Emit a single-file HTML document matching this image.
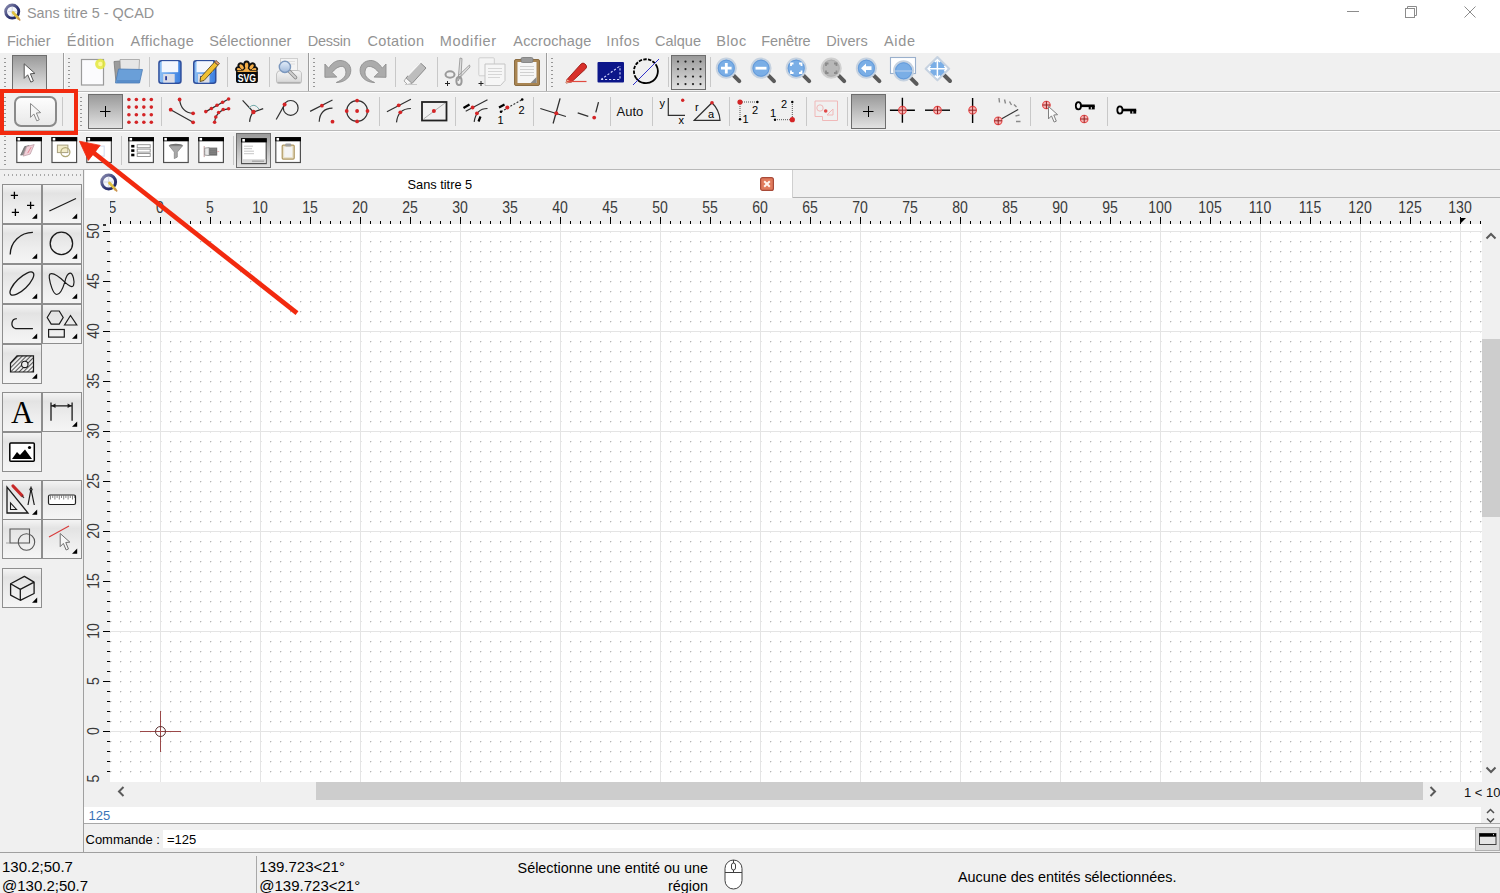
<!DOCTYPE html>
<html><head><meta charset="utf-8"><title>Sans titre 5 - QCAD</title>
<style>
*{margin:0;padding:0;box-sizing:border-box}
html,body{width:1500px;height:893px;overflow:hidden}
body{background:#f0f0f0;font-family:"Liberation Sans",sans-serif;position:relative;color:#000}
.a{position:absolute}
.t{white-space:nowrap;line-height:1}
svg{overflow:visible}
</style></head><body>
<div class="a" style="left:0px;top:0px;width:1500px;height:53px;background:#fff"></div>
<svg class="a" style="left:4px;top:4px;" width="18" height="18" viewBox="0 0 18 18"><g transform="scale(1.0)">
<defs><linearGradient id="lg18" x1="0" y1="0" x2="1" y2="1"><stop offset="0" stop-color="#8a8cb0"/><stop offset="0.6" stop-color="#2e3470"/><stop offset="1" stop-color="#1e2460"/></linearGradient></defs>
<circle cx="8.2" cy="7.6" r="6.6" fill="#f4f6fb" stroke="url(#lg18)" stroke-width="2.8"/>
<path d="M8.2 3 V12 M3.8 7.6 H12.6" stroke="#c8ccd8" stroke-width="0.7"/>
<path d="M9 8.5 L14.5 14.5" stroke="#e0c040" stroke-width="2.6" stroke-linecap="round"/>
<path d="M14 14 L15.8 16" stroke="#c89050" stroke-width="1.6" stroke-linecap="round"/>
</g></svg>
<div class="a t" style="left:27px;top:6px;font-size:14.4px;color:#939393">Sans titre 5 - QCAD</div>
<svg class="a" style="left:1340px;top:0px;" width="160" height="27" viewBox="0 0 160 27">
<line x1="7" y1="11.5" x2="19" y2="11.5" stroke="#8c8c8c" stroke-width="1"/>
<rect x="65.5" y="8.5" width="9" height="9" fill="none" stroke="#8c8c8c"/>
<path d="M67.5 8.5 V6.5 H76.5 V15.5 H74.5" fill="none" stroke="#8c8c8c"/>
<path d="M124.5 6.5 L135.5 17.5 M135.5 6.5 L124.5 17.5" stroke="#8c8c8c" stroke-width="1"/>
</svg>
<div class="a t" style="left:7px;top:33.5px;font-size:14.5px;color:#939393;letter-spacing:0px">Fichier</div>
<div class="a t" style="left:66.8px;top:33.5px;font-size:14.5px;color:#939393;letter-spacing:0.47px">Édition</div>
<div class="a t" style="left:130.6px;top:33.5px;font-size:14.5px;color:#939393;letter-spacing:0.37px">Affichage</div>
<div class="a t" style="left:209.2px;top:33.5px;font-size:14.5px;color:#939393;letter-spacing:0.15px">Sélectionner</div>
<div class="a t" style="left:307.8px;top:33.5px;font-size:14.5px;color:#939393;letter-spacing:-0.28px">Dessin</div>
<div class="a t" style="left:367.4px;top:33.5px;font-size:14.5px;color:#939393;letter-spacing:0.37px">Cotation</div>
<div class="a t" style="left:439.7px;top:33.5px;font-size:14.5px;color:#939393;letter-spacing:0.7px">Modifier</div>
<div class="a t" style="left:513.3px;top:33.5px;font-size:14.5px;color:#939393;letter-spacing:0.16px">Accrochage</div>
<div class="a t" style="left:606.3px;top:33.5px;font-size:14.5px;color:#939393;letter-spacing:0.42px">Infos</div>
<div class="a t" style="left:655px;top:33.5px;font-size:14.5px;color:#939393;letter-spacing:0px">Calque</div>
<div class="a t" style="left:716.3px;top:33.5px;font-size:14.5px;color:#939393;letter-spacing:0.57px">Bloc</div>
<div class="a t" style="left:761.3px;top:33.5px;font-size:14.5px;color:#939393;letter-spacing:-0.1px">Fenêtre</div>
<div class="a t" style="left:826.3px;top:33.5px;font-size:14.5px;color:#939393;letter-spacing:0.08px">Divers</div>
<div class="a t" style="left:884px;top:33.5px;font-size:14.5px;color:#939393;letter-spacing:0.67px">Aide</div>
<div class="a" style="left:0px;top:91px;width:1500px;height:1px;background:#b9b9b9"></div>
<div class="a" style="left:0px;top:92px;width:1500px;height:1px;background:#fdfdfd"></div>
<div class="a" style="left:0px;top:130px;width:1500px;height:1px;background:#b9b9b9"></div>
<div class="a" style="left:0px;top:131px;width:1500px;height:1px;background:#fdfdfd"></div>
<div class="a" style="left:0px;top:169px;width:1500px;height:1px;background:#b9b9b9"></div>
<div class="a" style="left:4px;top:58px;width:2px;height:29px;background:repeating-linear-gradient(#969696 0 1.5px,transparent 1.5px 4px)"></div>
<div class="a" style="left:12px;top:55px;width:35px;height:35px;border:1px solid #6e6e6e;background:linear-gradient(#9a9a9a,#e2e2e2)"></div>
<svg class="a" style="left:0px;top:0px;" width="1" height="1" viewBox="0 0 1 1"><path d="M24.20 63.80 L24.20 78.40 L27.70 74.80 L30.80 82.10 L33.40 81.00 L30.40 73.80 L34.90 73.40 Z" fill="#fff" stroke="#555" stroke-width="1"/></svg>
<div class="a" style="left:63px;top:53px;width:1px;height:38px;background:#9e9e9e"></div>
<div class="a" style="left:64px;top:53px;width:1px;height:38px;background:#fafafa"></div>
<div class="a" style="left:68px;top:58px;width:2px;height:29px;background:repeating-linear-gradient(#969696 0 1.5px,transparent 1.5px 4px)"></div>
<svg class="a" style="left:0px;top:0px;" width="1" height="1" viewBox="0 0 1 1"><rect x="81.5" y="59.5" width="22" height="25.5" fill="#fbfbfd" stroke="#9a9a9a" stroke-width="1.2"/><circle cx="100.3" cy="64" r="5.2" fill="#e4e83a" opacity="0.85"/><circle cx="100.3" cy="64" r="2.2" fill="#fff9a0"/><path d="M114 61.5 L120 61 L121 82.5 L116 82.5 Z" fill="#9c9c9c" stroke="#7a7a7a" stroke-width="0.8"/><path d="M120 59.5 L139.5 59.5 L139 70 L120.5 70 Z" fill="#e6e6e6" stroke="#a0a0a0" stroke-width="0.8"/><path d="M118.5 69 L142.5 69.5 L139.5 83 L115.5 83 Z" fill="#6a9fd8" stroke="#4d7cb6" stroke-width="0.8"/><rect x="117" y="80" width="23" height="3" fill="#4f82bf" opacity="0.6"/><g transform="translate(158.2 60)"><defs><linearGradient id="fl158" x1="0" y1="0" x2="1" y2="0"><stop offset="0" stop-color="#8ec0f4"/><stop offset="1" stop-color="#3a7ee0"/></linearGradient></defs><rect x="0.75" y="0.75" width="22" height="22.5" rx="2.5" fill="url(#fl158)" stroke="#2f4f9c" stroke-width="1.5"/><rect x="3.5" y="1.2" width="16.5" height="11" fill="#f4f7fd"/><rect x="5" y="14" width="11.5" height="8.6" fill="#dcdde6"/><rect x="7" y="16.2" width="1.8" height="4" fill="#2b3c9a"/></g><g transform="translate(193 60)"><defs><linearGradient id="fl193" x1="0" y1="0" x2="1" y2="0"><stop offset="0" stop-color="#8ec0f4"/><stop offset="1" stop-color="#3a7ee0"/></linearGradient></defs><rect x="0.75" y="0.75" width="22" height="22.5" rx="2.5" fill="url(#fl193)" stroke="#2f4f9c" stroke-width="1.5"/><rect x="3.5" y="1.2" width="16.5" height="11" fill="#f4f7fd"/><rect x="5" y="14" width="11.5" height="8.6" fill="#dcdde6"/><rect x="7" y="16.2" width="1.8" height="4" fill="#2b3c9a"/></g><path d="M200.5 77.5 L214.5 62 L218 65.2 L204 80.5 L200 81.5 Z" fill="#f0c030" stroke="#5a4a20" stroke-width="0.9"/><path d="M214.5 62 L216 60.5 L219.5 63.5 L218 65.2 Z" fill="#e89a70" stroke="#5a4a20" stroke-width="0.8"/><g fill="#111" stroke="#111" stroke-width="2.4"><ellipse cx="246.6" cy="65.6" rx="2.3" ry="3.9" transform="rotate(0 246.6 65.6)"/><ellipse cx="241.6" cy="66.8" rx="2.2" ry="3.6" transform="rotate(-38 241.6 66.8)"/><ellipse cx="251.6" cy="66.8" rx="2.2" ry="3.6" transform="rotate(38 251.6 66.8)"/><ellipse cx="239.2" cy="69.6" rx="1.8" ry="3.0" transform="rotate(-70 239.2 69.6)"/><ellipse cx="254.0" cy="69.6" rx="1.8" ry="3.0" transform="rotate(70 254.0 69.6)"/></g><g fill="#f4ae48"><ellipse cx="246.6" cy="65.6" rx="1.72" ry="3.12" transform="rotate(0 246.6 65.6)"/><ellipse cx="241.6" cy="66.8" rx="1.65" ry="2.88" transform="rotate(-38 241.6 66.8)"/><ellipse cx="251.6" cy="66.8" rx="1.65" ry="2.88" transform="rotate(38 251.6 66.8)"/><ellipse cx="239.2" cy="69.6" rx="1.35" ry="2.40" transform="rotate(-70 239.2 69.6)"/><ellipse cx="254.0" cy="69.6" rx="1.35" ry="2.40" transform="rotate(70 254.0 69.6)"/></g><rect x="236" y="70" width="21.9" height="13" rx="2.6" fill="#0a0a0a"/><path d="M237.5 71.3 H256.5" stroke="#f4ae48" stroke-width="1.3"/><path d="M243 71 L246.6 67 L250 71 Z" fill="#f4ae48"/><text transform="translate(246.9 81.6) scale(0.74 1)" font-family="Liberation Sans" font-weight="bold" font-size="11.8" fill="#fff" text-anchor="middle">SVG</text><defs><linearGradient id="pp1" x1="0" y1="0" x2="0" y2="1"><stop offset="0" stop-color="#f6f6f6"/><stop offset="1" stop-color="#d4d4d4"/></linearGradient><linearGradient id="pp2" x1="0" y1="0" x2="0" y2="1"><stop offset="0" stop-color="#e4eefa"/><stop offset="1" stop-color="#9fb8da"/></linearGradient></defs><rect x="280.5" y="58.5" width="17" height="13" fill="#f4f4f4" stroke="#cfcfcf" stroke-width="1"/><path d="M283 61.5 H295 M283 64 H295" stroke="#dadada" stroke-width="0.8"/><path d="M276.5 74 Q277 70.5 281 70.5 L297 70.5 Q301.5 70.5 301.5 74 L301.5 81 Q301.5 83.5 299 83.5 L279 83.5 Q276.5 83.5 276.5 81 Z" fill="url(#pp1)" stroke="#c2c2c2" stroke-width="1"/><path d="M277.5 82.5 H300.5" stroke="#b0b0b0" stroke-width="1.2"/><path d="M289.5 71.5 L295.5 77.5" stroke="#8a8a8a" stroke-width="3.6" stroke-linecap="round"/><path d="M289.5 71.5 L295.5 77.5" stroke="#d0d0d0" stroke-width="1.8" stroke-linecap="round"/><circle cx="284.9" cy="66.9" r="5.6" fill="url(#pp2)" stroke="#7b97bd" stroke-width="1.4"/></svg>
<div class="a" style="left:149px;top:57px;width:1px;height:30px;background:#c8c8c8"></div>
<div class="a" style="left:226.5px;top:57px;width:1px;height:30px;background:#c8c8c8"></div>
<div class="a" style="left:268.5px;top:57px;width:1px;height:30px;background:#c8c8c8"></div>
<div class="a" style="left:308px;top:53px;width:1px;height:38px;background:#9e9e9e"></div>
<div class="a" style="left:309px;top:53px;width:1px;height:38px;background:#fafafa"></div>
<div class="a" style="left:313px;top:58px;width:2px;height:29px;background:repeating-linear-gradient(#969696 0 1.5px,transparent 1.5px 4px)"></div>
<svg class="a" style="left:0px;top:0px;" width="1" height="1" viewBox="0 0 1 1"><path d="M324.9 64 L328.6 68.2 C332 63 336 60.5 340 60.5 C346.5 60.5 350.8 65 350.8 70.3 C350.8 77 345 82.5 336.3 82.5 C342 80 345.9 77 345.9 72.7 C345.9 68.5 344 66.4 341.9 66.4 C338 66.4 335 69 332.1 72.4 L336.8 77.1 L324.9 77.3 Z" fill="#ababab" stroke="#8e8e8e" stroke-width="0.9" stroke-linejoin="round"/><path d="M324.9 64 L328.6 68.2 C332 63 336 60.5 340 60.5 C346.5 60.5 350.8 65 350.8 70.3 C350.8 77 345 82.5 336.3 82.5 C342 80 345.9 77 345.9 72.7 C345.9 68.5 344 66.4 341.9 66.4 C338 66.4 335 69 332.1 72.4 L336.8 77.1 L324.9 77.3 Z" transform="translate(710.9 0) scale(-1 1)" fill="#ababab" stroke="#8e8e8e" stroke-width="0.9" stroke-linejoin="round"/><path d="M406 78 L420 62.5 L426 68 L412 83.5 Z" fill="#bdbdbd" stroke="#8a8a8a" stroke-width="1"/><path d="M408 75.5 L421.5 61 " stroke="#f8f8f8" stroke-width="1.4"/><path d="M406 78 L412 83.5 L407.5 84.5 L404 81 Z" fill="#f6f6f6" stroke="#9a9a9a" stroke-width="0.8"/><path d="M405 84.5 L417 84.5" stroke="#c8c8c8" stroke-width="1"/><path d="M458 81 L460 58 L462 58.5 L461 76 Z M458 76 L469.5 65 L470 67 L460.5 77 Z" fill="#e0e0e0" stroke="#9a9a9a" stroke-width="0.9"/><ellipse cx="450" cy="74.5" rx="4.5" ry="3.2" fill="none" stroke="#9a9a9a" stroke-width="2"/><ellipse cx="459" cy="81" rx="2.6" ry="4" fill="none" stroke="#9a9a9a" stroke-width="2"/><path d="M445 83.5 H450 M447.5 81 V86" stroke="#222" stroke-width="1"/><rect x="478.8" y="57.8" width="15.5" height="18" rx="1" fill="#f4f4f4" stroke="#cfcfcf" stroke-width="1"/><path d="M485 64 H505 V80.5 L500.5 85.5 H485 Z" fill="#f6f6f6" stroke="#c4c4c4" stroke-width="1"/><path d="M488 68.5 H502 M488 71.5 H502 M488 74.5 H502 M488 77.5 H500" stroke="#d6d6d6" stroke-width="1"/><path d="M478.5 83.5 H483.5 M481 81 V86" stroke="#222" stroke-width="1"/><rect x="514.5" y="59.5" width="25" height="26" rx="1.5" fill="#a98552" stroke="#8a6c42" stroke-width="1"/><rect x="517.5" y="62" width="19" height="21" fill="#f6f6f6"/><rect x="521" y="57.5" width="12" height="5" rx="1.5" fill="#9a9a9a" stroke="#777" stroke-width="0.8"/><path d="M520 66.5 H534 M520 69.5 H534 M520 72.5 H534 M520 75.5 H534" stroke="#d0d0d0" stroke-width="1"/><path d="M530.5 83 L536.5 77 V83 Z" fill="#8a8a8a"/></svg>
<div class="a" style="left:394.5px;top:57px;width:1px;height:30px;background:#c8c8c8"></div>
<div class="a" style="left:436.5px;top:57px;width:1px;height:30px;background:#c8c8c8"></div>
<div class="a" style="left:546px;top:53px;width:1px;height:38px;background:#9e9e9e"></div>
<div class="a" style="left:547px;top:53px;width:1px;height:38px;background:#fafafa"></div>
<div class="a" style="left:551px;top:58px;width:2px;height:29px;background:repeating-linear-gradient(#969696 0 1.5px,transparent 1.5px 4px)"></div>
<svg class="a" style="left:0px;top:0px;" width="1" height="1" viewBox="0 0 1 1"><path d="M567 79.5 L581 64 Q583 62 585 64 L586 65 Q587.5 67 585.5 69 L571.5 82 L566 83 Z" fill="#d8302a" stroke="#9a1a14" stroke-width="0.9"/><path d="M567 79.5 L571.5 82 L566 83 Z" fill="#f0c8a0"/><path d="M567 81.5 H586.5" stroke="#e04a40" stroke-width="1.2"/><rect x="597.5" y="62" width="26.5" height="20.5" rx="1" fill="#0c168a"/><path d="M601 79.5 L620 66 M601 79.5 H620 V66" stroke="#d8dcff" stroke-width="1.1" stroke-dasharray="2.2 1.8" fill="none"/><path d="M655.6 64.2 A11.6 11.6 0 1 1 636.2 78.2" fill="none" stroke="#000" stroke-width="1.8"/><path d="M636.2 78.2 A11.6 11.6 0 0 1 655.6 64.2" fill="none" stroke="#000" stroke-width="1.8" stroke-dasharray="3.4 1.3"/><path d="M633 85 L659 59" stroke="#3030c8" stroke-width="1"/></svg>
<div class="a" style="left:667.5px;top:57px;width:1px;height:30px;background:#c8c8c8"></div>
<div class="a" style="left:671px;top:55px;width:35px;height:35px;border:1px solid #6e6e6e;background:linear-gradient(#9a9a9a,#e2e2e2)"></div>
<svg class="a" style="left:0px;top:0px;" width="1" height="1" viewBox="0 0 1 1"><circle cx="678.0" cy="61.6" r="1.1" fill="#222"/><circle cx="678.0" cy="69.1" r="1.1" fill="#222"/><circle cx="678.0" cy="76.6" r="1.1" fill="#222"/><circle cx="678.0" cy="84.1" r="1.1" fill="#222"/><circle cx="685.5" cy="61.6" r="1.1" fill="#222"/><circle cx="685.5" cy="69.1" r="1.1" fill="#222"/><circle cx="685.5" cy="76.6" r="1.1" fill="#222"/><circle cx="685.5" cy="84.1" r="1.1" fill="#222"/><circle cx="693.0" cy="61.6" r="1.1" fill="#222"/><circle cx="693.0" cy="69.1" r="1.1" fill="#222"/><circle cx="693.0" cy="76.6" r="1.1" fill="#222"/><circle cx="693.0" cy="84.1" r="1.1" fill="#222"/><circle cx="700.5" cy="61.6" r="1.1" fill="#222"/><circle cx="700.5" cy="69.1" r="1.1" fill="#222"/><circle cx="700.5" cy="76.6" r="1.1" fill="#222"/><circle cx="700.5" cy="84.1" r="1.1" fill="#222"/></svg>
<div class="a" style="left:709.5px;top:57px;width:1px;height:30px;background:#c8c8c8"></div>
<svg class="a" style="left:0px;top:0px;" width="1" height="1" viewBox="0 0 1 1"><g><path d="M732.3 74.2 L739.3 81.2" stroke="#5a5a5a" stroke-width="4" stroke-linecap="round"/><circle cx="726.3" cy="68.2" r="9.6" fill="#7aaee6" stroke="#c6d2e0" stroke-width="2"/><circle cx="726.3" cy="68.2" r="8" fill="none" stroke="#5f95d6" stroke-width="0.8"/><path d="M721 68.2 H731.6 M726.3 63 V73.4" stroke="#fff" stroke-width="2.8"/></g><g><path d="M767 74.2 L774 81.2" stroke="#5a5a5a" stroke-width="4" stroke-linecap="round"/><circle cx="761" cy="68.2" r="9.6" fill="#7aaee6" stroke="#c6d2e0" stroke-width="2"/><circle cx="761" cy="68.2" r="8" fill="none" stroke="#5f95d6" stroke-width="0.8"/><path d="M755.5 68.2 H766.5" stroke="#fff" stroke-width="2.8"/></g><g><path d="M802.2 74.2 L809.2 81.2" stroke="#5a5a5a" stroke-width="4" stroke-linecap="round"/><circle cx="796.2" cy="68.2" r="9.6" fill="#7aaee6" stroke="#c6d2e0" stroke-width="2"/><circle cx="796.2" cy="68.2" r="8" fill="none" stroke="#5f95d6" stroke-width="0.8"/><path d="M791 66 V63.5 H793.5 M799 63.5 H801.5 V66 M801.5 70.5 V73 H799 M793.5 73 H791 V70.5" stroke="#fff" stroke-width="1.8" fill="none"/></g><g><path d="M837.2 74.2 L844.2 81.2" stroke="#5a5a5a" stroke-width="4" stroke-linecap="round"/><circle cx="831.2" cy="68.2" r="9.6" fill="#b8b8b8" stroke="#d0d0d0" stroke-width="2"/><circle cx="831.2" cy="68.2" r="8" fill="none" stroke="#a9a9a9" stroke-width="0.8"/><path d="M826 66 V63.5 H828.5 M834 63.5 H836.5 V66 M836.5 70.5 V73 H834 M828.5 73 H826 V70.5" stroke="#8a8a8a" stroke-width="1.8" fill="none"/></g><g><path d="M872.4 74.2 L879.4 81.2" stroke="#5a5a5a" stroke-width="4" stroke-linecap="round"/><circle cx="866.4" cy="68.2" r="9.6" fill="#7aaee6" stroke="#c6d2e0" stroke-width="2"/><circle cx="866.4" cy="68.2" r="8" fill="none" stroke="#5f95d6" stroke-width="0.8"/><path d="M861 68.2 L866 63.5 V66.3 H871.5 V70.1 H866 V73 Z" fill="#fff"/></g><rect x="890.5" y="57.5" width="25" height="16" fill="#fff" stroke="#9ab0cc" stroke-width="1.1"/><g><path d="M909.6 76.8 L916.6 83.8" stroke="#5a5a5a" stroke-width="4" stroke-linecap="round"/><circle cx="903.6" cy="70.8" r="9.6" fill="#7aaee6" stroke="#c6d2e0" stroke-width="2"/><circle cx="903.6" cy="70.8" r="8" fill="none" stroke="#5f95d6" stroke-width="0.8"/><path d="M895 71 H912" stroke="#bcd2ee" stroke-width="1"/></g><path d="M943 74 L950 81" stroke="#5a5a5a" stroke-width="4" stroke-linecap="round"/><path d="M937.4 57 L949.2 68.7 L937.4 80.4 L925.6 68.7 Z" fill="#7aaee6" stroke="#c6d2e0" stroke-width="2" stroke-linejoin="round"/><path d="M937.4 59.5 V78 M928 68.7 H947 M934.8 62 L937.4 59.5 L940 62 M934.8 75.5 L937.4 78 L940 75.5 M930.5 66.1 L928 68.7 L930.5 71.3 M944.3 66.1 L946.8 68.7 L944.3 71.3" stroke="#fff" stroke-width="1.5" fill="none"/></svg>
<div class="a" style="left:4px;top:97px;width:2px;height:30px;background:repeating-linear-gradient(#969696 0 1.5px,transparent 1.5px 4px)"></div>
<div class="a" style="left:14px;top:96px;width:43px;height:31px;border:2px solid #8a8a8a;border-radius:7px;background:linear-gradient(#fdfdfd,#e9e9e9)"></div>
<svg class="a" style="left:0px;top:0px;" width="1" height="1" viewBox="0 0 1 1"><path d="M30.50 103.50 L30.50 117.37 L33.83 113.95 L36.77 120.89 L39.24 119.84 L36.39 113.00 L40.66 112.62 Z" fill="#f6f6f6" stroke="#8a8a8a" stroke-width="1"/></svg>
<div class="a" style="left:62px;top:97px;width:1px;height:29px;background:#c8c8c8"></div>
<div class="a" style="left:80px;top:97px;width:2px;height:30px;background:repeating-linear-gradient(#969696 0 1.5px,transparent 1.5px 4px)"></div>
<div class="a" style="left:88px;top:94px;width:35px;height:35px;border:1px solid #6e6e6e;background:linear-gradient(#9a9a9a,#e2e2e2)"></div>
<svg class="a" style="left:0px;top:0px;" width="1" height="1" viewBox="0 0 1 1"><path d="M100 111.5 H110.5 M105.5 106 V117" stroke="#000" stroke-width="1"/><circle cx="128.90" cy="99.50" r="1.8" fill="#d42426"/><circle cx="128.90" cy="107.10" r="1.8" fill="#d42426"/><circle cx="128.90" cy="114.70" r="1.8" fill="#d42426"/><circle cx="128.90" cy="122.30" r="1.8" fill="#d42426"/><circle cx="136.37" cy="99.50" r="1.8" fill="#d42426"/><circle cx="136.37" cy="107.10" r="1.8" fill="#d42426"/><circle cx="136.37" cy="114.70" r="1.8" fill="#d42426"/><circle cx="136.37" cy="122.30" r="1.8" fill="#d42426"/><circle cx="143.84" cy="99.50" r="1.8" fill="#d42426"/><circle cx="143.84" cy="107.10" r="1.8" fill="#d42426"/><circle cx="143.84" cy="114.70" r="1.8" fill="#d42426"/><circle cx="143.84" cy="122.30" r="1.8" fill="#d42426"/><circle cx="151.31" cy="99.50" r="1.8" fill="#d42426"/><circle cx="151.31" cy="107.10" r="1.8" fill="#d42426"/><circle cx="151.31" cy="114.70" r="1.8" fill="#d42426"/><circle cx="151.31" cy="122.30" r="1.8" fill="#d42426"/><path d="M170.7 109.7 L193.1 122.3 M179.6 99.5 Q181 112.5 193.1 113.3" stroke="#303030" stroke-width="1.2" fill="none"/><circle cx="170.7" cy="109.7" r="1.9" fill="#d42426"/><circle cx="193.1" cy="122.3" r="1.9" fill="#d42426"/><circle cx="179.6" cy="99.5" r="1.9" fill="#d42426"/><circle cx="193.1" cy="113.3" r="1.9" fill="#d42426"/><path d="M205.8 111.6 L228.6 99 M214.6 122.3 Q216 110 228.6 108.8" stroke="#303030" stroke-width="1.2" fill="none"/><circle cx="205.8" cy="111.6" r="1.8" fill="#d42426"/><circle cx="211.4" cy="108.5" r="1.8" fill="#d42426"/><circle cx="217" cy="105.3" r="1.8" fill="#d42426"/><circle cx="222.6" cy="102.2" r="1.8" fill="#d42426"/><circle cx="228.6" cy="99" r="1.8" fill="#d42426"/><circle cx="214.6" cy="122.3" r="1.8" fill="#d42426"/><circle cx="215.8" cy="117" r="1.8" fill="#d42426"/><circle cx="218.6" cy="112.5" r="1.8" fill="#d42426"/><circle cx="223.2" cy="109.5" r="1.8" fill="#d42426"/><circle cx="228.6" cy="108.8" r="1.8" fill="#d42426"/><path d="M242.6 100.4 L253.4 112 L263.2 108.6 M253.4 112 Q250 116 249.6 121.9" stroke="#303030" stroke-width="1.2" fill="none"/><path d="M249 108 Q254 102 259 109" stroke="#70a8a8" stroke-width="1" fill="none"/><circle cx="253.4" cy="112" r="2.2" fill="#d42426"/><circle cx="290.7" cy="107.9" r="7.4" fill="none" stroke="#303030" stroke-width="1.2"/><path d="M276.2 119.5 L284.6 104.6" stroke="#303030" stroke-width="1.2"/><circle cx="284.6" cy="104.6" r="2" fill="#d42426"/><path d="M310.1 111.4 L332.5 100 M319.2 121.7 Q320 108.5 332.5 108.2" stroke="#303030" stroke-width="1.2" fill="none"/><circle cx="321.9" cy="105.7" r="1.9" fill="#d42426"/><circle cx="332.5" cy="121.7" r="1.9" fill="#d42426"/><circle cx="357.1" cy="111" r="10.4" fill="none" stroke="#303030" stroke-width="1.2"/><circle cx="357.1" cy="111" r="1.9" fill="#d42426"/><circle cx="357.1" cy="100.6" r="1.9" fill="#d42426"/><circle cx="357.1" cy="121.4" r="1.9" fill="#d42426"/><circle cx="346.7" cy="111" r="1.9" fill="#d42426"/><circle cx="367.5" cy="111" r="1.9" fill="#d42426"/><path d="M386.9 111.7 L410.9 99.3 M396.5 122.4 Q398 108.5 410.9 108.5" stroke="#303030" stroke-width="1.2" fill="none"/><circle cx="398.7" cy="105.3" r="1.9" fill="#d42426"/><circle cx="400.3" cy="112.3" r="1.9" fill="#d42426"/><rect x="422" y="102" width="24.5" height="18.5" fill="none" stroke="#222" stroke-width="1.8"/><path d="M423.5 119 L445 103" stroke="#909090" stroke-width="0.7"/><circle cx="433.9" cy="111" r="2" fill="#d42426"/><path d="M465.7 111.2 L487.5 99.7 M474.2 121.9 Q476 108.5 487.5 108.5" stroke="#303030" stroke-width="1.2" fill="none"/><path d="M463.5 108 L469.5 104.5 M478.5 121.5 L480.5 116.5" stroke="#000" stroke-width="2.2"/><circle cx="472.6" cy="107.5" r="1.9" fill="#d42426"/><circle cx="476.9" cy="113.3" r="1.9" fill="#d42426"/><path d="M501 111.7 L522.2 99.5" stroke="#303030" stroke-width="1.1" stroke-dasharray="2 1.6"/><path d="M499 107.5 L504.5 104.5" stroke="#000" stroke-width="2.2"/><circle cx="501" cy="111.7" r="1.3" fill="#000"/><circle cx="522.2" cy="99.5" r="1.3" fill="#000"/><circle cx="507.3" cy="107.5" r="2" fill="#d42426"/><text x="497.5" y="124" font-family="Liberation Sans" font-size="11" fill="#000">1</text><text x="518.5" y="113.6" font-family="Liberation Sans" font-size="11" fill="#000">2</text><path d="M540.3 108.5 L565.9 116.5 M560.1 98.4 L553.1 123.5" stroke="#303030" stroke-width="1.3"/><circle cx="556.3" cy="113.3" r="2" fill="#d42426"/><path d="M577.7 112.8 L588.3 116.3 M598.5 102.1 L595.8 112.3" stroke="#303030" stroke-width="1.3"/><circle cx="594.2" cy="117.6" r="1.9" fill="#d42426"/><text x="616.5" y="115.5" font-family="Liberation Sans" font-size="13" fill="#111">Auto</text><path d="M668.3 98 V115.3 H685" stroke="#303030" stroke-width="1.2" fill="none"/><text x="659.5" y="107" font-family="Liberation Sans" font-size="11" fill="#000">y</text><text x="678.5" y="123.5" font-family="Liberation Sans" font-size="11" fill="#000">x</text><circle cx="682.7" cy="100.3" r="1.7" fill="#d42426"/><path d="M694.3 120.3 L712 102.7 Q719.5 110 720 120.3 Z" stroke="#303030" stroke-width="1.2" fill="none"/><text x="695" y="110.5" font-family="Liberation Sans" font-size="11" fill="#000">r</text><text x="708" y="117.5" font-family="Liberation Sans" font-size="11" fill="#000">a</text><circle cx="712" cy="102.7" r="1.8" fill="#d42426"/><path d="M740 102 H757.4 M740 102 V119.3" stroke="#555" stroke-width="1" stroke-dasharray="1 1"/><circle cx="757.4" cy="102" r="1.2" fill="#000"/><circle cx="740" cy="119.3" r="1.2" fill="#000"/><circle cx="740" cy="102" r="2.6" fill="#d42426"/><text x="742.5" y="123" font-family="Liberation Sans" font-size="11" fill="#000">1</text><text x="752" y="114" font-family="Liberation Sans" font-size="11" fill="#000">2</text><path d="M775 119.7 H792.3 M792.3 102 V119.7" stroke="#555" stroke-width="1" stroke-dasharray="1 1"/><circle cx="775" cy="119.7" r="1.2" fill="#000"/><circle cx="792.3" cy="102" r="1.2" fill="#000"/><circle cx="792.3" cy="119.7" r="2.6" fill="#d42426"/><text x="770" y="117" font-family="Liberation Sans" font-size="11" fill="#000">1</text><text x="781" y="108" font-family="Liberation Sans" font-size="11" fill="#000">2</text><path d="M815 101 H837.5 V120.5 H822.5 V116.5 H815 Z" fill="none" stroke="#f0b8b8" stroke-width="1"/><circle cx="820" cy="108" r="3.2" fill="none" stroke="#f0b8b8"/><path d="M827 115 L833 109 V115 Z" fill="none" stroke="#f0b8b8"/><circle cx="825.7" cy="111" r="1.8" fill="#e04848"/></svg>
<div class="a" style="left:161px;top:97px;width:1px;height:29px;background:#c8c8c8"></div>
<div class="a" style="left:378.5px;top:97px;width:1px;height:29px;background:#c8c8c8"></div>
<div class="a" style="left:455px;top:97px;width:1px;height:29px;background:#c8c8c8"></div>
<div class="a" style="left:532.5px;top:97px;width:1px;height:29px;background:#c8c8c8"></div>
<div class="a" style="left:609.5px;top:97px;width:1px;height:29px;background:#c8c8c8"></div>
<div class="a" style="left:651.5px;top:97px;width:1px;height:29px;background:#c8c8c8"></div>
<div class="a" style="left:728.5px;top:97px;width:1px;height:29px;background:#c8c8c8"></div>
<div class="a" style="left:805.5px;top:97px;width:1px;height:29px;background:#c8c8c8"></div>
<div class="a" style="left:847px;top:97px;width:1px;height:29px;background:#c8c8c8"></div>
<div class="a" style="left:851px;top:94px;width:35px;height:35px;border:1px solid #6e6e6e;background:linear-gradient(#9a9a9a,#e2e2e2)"></div>
<svg class="a" style="left:0px;top:0px;" width="1" height="1" viewBox="0 0 1 1"><path d="M863 111.5 H873.5 M868.5 106 V117" stroke="#000" stroke-width="1"/><path d="M889.9 110.2 H914.9 M902.4 97.7 V122.7" stroke="#000" stroke-width="1.4"/><circle cx="902.4" cy="110.2" r="3.8" fill="#f6b4b4" stroke="#e84848" stroke-width="1.1"/><path d="M898.6 110.2 H906.1999999999999 M902.4 106.4 V114.0" stroke="#902020" stroke-width="1"/><path d="M925 110.2 H950" stroke="#000" stroke-width="1.4"/><circle cx="937.5" cy="110.2" r="3.8" fill="#f6b4b4" stroke="#e84848" stroke-width="1.1"/><path d="M933.7 110.2 H941.3 M937.5 106.4 V114.0" stroke="#902020" stroke-width="1"/><path d="M972.6 98 V123" stroke="#000" stroke-width="1.4"/><circle cx="972.6" cy="110.2" r="3.8" fill="#f6b4b4" stroke="#e84848" stroke-width="1.1"/><path d="M968.8000000000001 110.2 H976.4 M972.6 106.4 V114.0" stroke="#902020" stroke-width="1"/><path d="M998.2 120.8 L1018.2 109.4" stroke="#333" stroke-width="1.2"/><path d="M999 98 L999.5 102.5 M1004.5 99.5 L1005.5 103.5 M1009.5 101.5 L1011.5 105 M1014 104.5 L1016.5 107 M1015.5 116 L1019.5 115 M1016 121.5 L1020.5 121.5" stroke="#8a8a8a" stroke-width="1.4"/><circle cx="998.2" cy="120.8" r="3.8" fill="#f6b4b4" stroke="#e84848" stroke-width="1.1"/><path d="M994.4000000000001 120.8 H1002.0 M998.2 117.0 V124.6" stroke="#902020" stroke-width="1"/><circle cx="1046.4" cy="105" r="3.8" fill="#f6b4b4" stroke="#e84848" stroke-width="1.1"/><path d="M1042.6000000000001 105 H1050.2 M1046.4 101.2 V108.8" stroke="#902020" stroke-width="1"/><path d="M1048.50 106.50 L1048.50 118.91 L1051.47 115.85 L1054.11 122.06 L1056.32 121.12 L1053.77 115.00 L1057.60 114.66 Z" fill="#fafafa" stroke="#808080" stroke-width="1"/><g transform="translate(1075.2 105.8) scale(1.0)"><ellipse cx="3.2" cy="0" rx="2.6" ry="3.6" fill="none" stroke="#000" stroke-width="1.8"/><path d="M5.8 0 H19.5" stroke="#000" stroke-width="2.6"/><rect x="13.5" y="0" width="6" height="3.6" fill="#000"/><rect x="15.6" y="1.3" width="1" height="2.3" fill="#f0f0f0"/></g><circle cx="1084.2" cy="119" r="3.8" fill="#f6b4b4" stroke="#e84848" stroke-width="1.1"/><path d="M1080.4 119 H1088.0 M1084.2 115.2 V122.8" stroke="#902020" stroke-width="1"/><g transform="translate(1116.7 110) scale(1.0)"><ellipse cx="3.2" cy="0" rx="2.6" ry="3.6" fill="none" stroke="#000" stroke-width="1.8"/><path d="M5.8 0 H19.5" stroke="#000" stroke-width="2.6"/><rect x="13.5" y="0" width="6" height="3.6" fill="#000"/><rect x="15.6" y="1.3" width="1" height="2.3" fill="#f0f0f0"/></g></svg>
<div class="a" style="left:1029.5px;top:97px;width:1px;height:29px;background:#c8c8c8"></div>
<div class="a" style="left:1106.5px;top:97px;width:1px;height:29px;background:#c8c8c8"></div>
<div class="a" style="left:4px;top:136px;width:2px;height:29px;background:repeating-linear-gradient(#969696 0 1.5px,transparent 1.5px 4px)"></div>
<svg class="a" style="left:0px;top:0px;" width="1" height="1" viewBox="0 0 1 1"><g transform="translate(16.2 137.1)"><rect x="0.6" y="0.6" width="24.6" height="24.8" fill="#fff" stroke="#505050" stroke-width="1.2"/><rect x="0" y="0" width="25.8" height="4.2" fill="#000"/><rect x="1.3" y="0.8" width="2.6" height="2.6" fill="#fff"/><path d="M4.5 18 L8.5 9.5 L13 8.5 L9.5 17 Z" fill="#8a8a8a" stroke="#6a6a6a" stroke-width="0.8"/><path d="M7 19 L10.5 9.5 L18 7.5 L14 17 Z" fill="#f0d0d8" stroke="#c0a0a8" stroke-width="0.8"/><path d="M11.5 16 L15 10" stroke="#e07080" stroke-width="0.8"/></g><g transform="translate(51.4 137.1)"><rect x="0.6" y="0.6" width="24.6" height="24.8" fill="#fff" stroke="#505050" stroke-width="1.2"/><rect x="0" y="0" width="25.8" height="4.2" fill="#000"/><rect x="1.3" y="0.8" width="2.6" height="2.6" fill="#fff"/><rect x="6" y="8" width="10.5" height="7.5" fill="#f2ecc8" stroke="#a8a080" stroke-width="1"/><circle cx="14" cy="15" r="4.5" fill="none" stroke="#b0a878" stroke-width="1.3"/></g><g transform="translate(86.2 137.1)"><rect x="0.6" y="0.6" width="24.6" height="24.8" fill="#fff" stroke="#505050" stroke-width="1.2"/><rect x="0" y="0" width="25.8" height="4.2" fill="#000"/><rect x="1.3" y="0.8" width="2.6" height="2.6" fill="#fff"/><rect x="10" y="9" width="8" height="10" fill="none" stroke="#d8e0f0" stroke-width="1.2"/></g><g transform="translate(128.2 137.1)"><rect x="0.6" y="0.6" width="24.6" height="24.8" fill="#fff" stroke="#505050" stroke-width="1.2"/><rect x="0" y="0" width="25.8" height="4.2" fill="#000"/><rect x="1.3" y="0.8" width="2.6" height="2.6" fill="#fff"/><rect x="3" y="7.8" width="3.2" height="2.6" fill="#000"/><rect x="3" y="12.2" width="3.2" height="2.6" fill="#000"/><rect x="3" y="16.6" width="3.2" height="2.6" fill="#000"/><rect x="9" y="7.6" width="13" height="3" fill="none" stroke="#909090" stroke-width="0.9"/><rect x="9" y="12" width="13" height="3" fill="none" stroke="#909090" stroke-width="0.9"/><rect x="9" y="16.4" width="13" height="3" fill="none" stroke="#909090" stroke-width="0.9"/></g><g transform="translate(163 137.1)"><rect x="0.6" y="0.6" width="24.6" height="24.8" fill="#fff" stroke="#505050" stroke-width="1.2"/><rect x="0" y="0" width="25.8" height="4.2" fill="#000"/><rect x="1.3" y="0.8" width="2.6" height="2.6" fill="#fff"/><ellipse cx="12.9" cy="8.5" rx="6.8" ry="1.8" fill="#707070"/><path d="M6.2 8.6 L11.3 15 V21.5 L14.3 20 V15 L19.6 8.6 Z" fill="#a8a8a8" stroke="#808080" stroke-width="0.7"/></g><g transform="translate(198.2 137.1)"><rect x="0.6" y="0.6" width="24.6" height="24.8" fill="#fff" stroke="#505050" stroke-width="1.2"/><rect x="0" y="0" width="25.8" height="4.2" fill="#000"/><rect x="1.3" y="0.8" width="2.6" height="2.6" fill="#fff"/><path d="M6 9 V20 M6 14.5 H9" stroke="#b08080" stroke-width="0.8"/><path d="M6.5 11 L11 10.5 V18.5 L6.5 18 Z" fill="#e8e8e8" stroke="#888" stroke-width="0.8"/><rect x="11" y="10.5" width="8" height="8" fill="#707070"/><path d="M12 12 H18 M12 14 H18 M12 16 H18" stroke="#a0a0a0" stroke-width="0.6"/><path d="M19 14.5 H21" stroke="#e0a0a0" stroke-width="0.8"/></g><g transform="translate(275.2 137.1)"><rect x="0.6" y="0.6" width="24.6" height="24.8" fill="#fff" stroke="#505050" stroke-width="1.2"/><rect x="0" y="0" width="25.8" height="4.2" fill="#000"/><rect x="1.3" y="0.8" width="2.6" height="2.6" fill="#fff"/><rect x="7" y="8" width="12" height="14" rx="1" fill="#e8e0c8" stroke="#b09860" stroke-width="1.2"/><rect x="9" y="10" width="8" height="10" fill="#f4f4f4"/><rect x="10" y="6.5" width="6" height="3" rx="1" fill="#a0a0a0"/></g></svg>
<div class="a" style="left:120.5px;top:136px;width:1px;height:29px;background:#c8c8c8"></div>
<div class="a" style="left:232.5px;top:136px;width:1px;height:29px;background:#c8c8c8"></div>
<div class="a" style="left:236px;top:133px;width:35px;height:35px;border:1px solid #6e6e6e;background:linear-gradient(#9a9a9a,#e2e2e2)"></div>
<svg class="a" style="left:0px;top:0px;" width="1" height="1" viewBox="0 0 1 1"><g transform="translate(241 138.2)"><rect x="0.6" y="0.6" width="24.6" height="24.8" fill="#fff" stroke="#505050" stroke-width="1.2"/><rect x="0" y="0" width="25.8" height="4.2" fill="#000"/><rect x="1.3" y="0.8" width="2.6" height="2.6" fill="#fff"/><rect x="1" y="21" width="23.8" height="3.6" fill="#d8d8d8"/><path d="M3 8 H12 M3 10.5 H11 M3 13 H13 M3 15.5 H13" stroke="#c0c0c0" stroke-width="0.9"/><path d="M11 23 H23" stroke="#a0a0a0" stroke-width="1.2"/></g></svg>
<div class="a" style="left:83px;top:170px;width:1px;height:683px;background:#a0a0a0"></div>
<div class="a" style="left:4px;top:174px;width:77px;height:2px;background:repeating-linear-gradient(90deg,#a8a8a8 0 1px,transparent 1px 4px)"></div>
<div class="a" style="left:2px;top:184px;width:40px;height:40px;border:1px solid #8e8e8e;background:linear-gradient(#f4f4f4 0,#e3e3e3 22%,#ededed 60%,#f5f5f5 100%)"></div>
<div class="a" style="left:42px;top:184px;width:40px;height:40px;border:1px solid #8e8e8e;background:linear-gradient(#f4f4f4 0,#e3e3e3 22%,#ededed 60%,#f5f5f5 100%)"></div>
<div class="a" style="left:2px;top:224px;width:40px;height:40px;border:1px solid #8e8e8e;background:linear-gradient(#f4f4f4 0,#e3e3e3 22%,#ededed 60%,#f5f5f5 100%)"></div>
<div class="a" style="left:42px;top:224px;width:40px;height:40px;border:1px solid #8e8e8e;background:linear-gradient(#f4f4f4 0,#e3e3e3 22%,#ededed 60%,#f5f5f5 100%)"></div>
<div class="a" style="left:2px;top:264px;width:40px;height:40px;border:1px solid #8e8e8e;background:linear-gradient(#f4f4f4 0,#e3e3e3 22%,#ededed 60%,#f5f5f5 100%)"></div>
<div class="a" style="left:42px;top:264px;width:40px;height:40px;border:1px solid #8e8e8e;background:linear-gradient(#f4f4f4 0,#e3e3e3 22%,#ededed 60%,#f5f5f5 100%)"></div>
<div class="a" style="left:2px;top:304px;width:40px;height:40px;border:1px solid #8e8e8e;background:linear-gradient(#f4f4f4 0,#e3e3e3 22%,#ededed 60%,#f5f5f5 100%)"></div>
<div class="a" style="left:42px;top:304px;width:40px;height:40px;border:1px solid #8e8e8e;background:linear-gradient(#f4f4f4 0,#e3e3e3 22%,#ededed 60%,#f5f5f5 100%)"></div>
<div class="a" style="left:2px;top:344px;width:40px;height:40px;border:1px solid #8e8e8e;background:linear-gradient(#f4f4f4 0,#e3e3e3 22%,#ededed 60%,#f5f5f5 100%)"></div>
<div class="a" style="left:2px;top:392px;width:40px;height:40px;border:1px solid #8e8e8e;background:linear-gradient(#f4f4f4 0,#e3e3e3 22%,#ededed 60%,#f5f5f5 100%)"></div>
<div class="a" style="left:42px;top:392px;width:40px;height:40px;border:1px solid #8e8e8e;background:linear-gradient(#f4f4f4 0,#e3e3e3 22%,#ededed 60%,#f5f5f5 100%)"></div>
<div class="a" style="left:2px;top:432px;width:40px;height:40px;border:1px solid #8e8e8e;background:linear-gradient(#f4f4f4 0,#e3e3e3 22%,#ededed 60%,#f5f5f5 100%)"></div>
<div class="a" style="left:2px;top:480px;width:40px;height:40px;border:1px solid #8e8e8e;background:linear-gradient(#f4f4f4 0,#e3e3e3 22%,#ededed 60%,#f5f5f5 100%)"></div>
<div class="a" style="left:42px;top:480px;width:40px;height:40px;border:1px solid #8e8e8e;background:linear-gradient(#f4f4f4 0,#e3e3e3 22%,#ededed 60%,#f5f5f5 100%)"></div>
<div class="a" style="left:2px;top:519px;width:40px;height:40px;border:1px solid #8e8e8e;background:linear-gradient(#f4f4f4 0,#e3e3e3 22%,#ededed 60%,#f5f5f5 100%)"></div>
<div class="a" style="left:42px;top:519px;width:40px;height:40px;border:1px solid #8e8e8e;background:linear-gradient(#f4f4f4 0,#e3e3e3 22%,#ededed 60%,#f5f5f5 100%)"></div>
<div class="a" style="left:2px;top:568px;width:40px;height:40px;border:1px solid #8e8e8e;background:linear-gradient(#f4f4f4 0,#e3e3e3 22%,#ededed 60%,#f5f5f5 100%)"></div>
<svg class="a" style="left:0px;top:0px;" width="1" height="1" viewBox="0 0 1 1"><path d="M32 218.8 H37.2 V213.6 Z" fill="#000"/><path d="M72 218.8 H77.2 V213.6 Z" fill="#000"/><path d="M32 258.8 H37.2 V253.6 Z" fill="#000"/><path d="M72 258.8 H77.2 V253.6 Z" fill="#000"/><path d="M32 298.8 H37.2 V293.6 Z" fill="#000"/><path d="M72 298.8 H77.2 V293.6 Z" fill="#000"/><path d="M32 338.8 H37.2 V333.6 Z" fill="#000"/><path d="M72 338.8 H77.2 V333.6 Z" fill="#000"/><path d="M32 378.8 H37.2 V373.6 Z" fill="#000"/><path d="M72 426.8 H77.2 V421.6 Z" fill="#000"/><path d="M32 514.8 H37.2 V509.6 Z" fill="#000"/><path d="M72 553.8 H77.2 V548.6 Z" fill="#000"/><path d="M32 602.8 H37.2 V597.6 Z" fill="#000"/><path d="M10.8 195.3 H18.0 M14.4 191.70000000000002 V198.9" stroke="#000" stroke-width="1.3"/><path d="M27.0 205.4 H34.2 M30.6 201.8 V209.0" stroke="#000" stroke-width="1.3"/><path d="M11.8 212.3 H19.0 M15.4 208.70000000000002 V215.9" stroke="#000" stroke-width="1.3"/><path d="M49.4 211 L76 198.5" stroke="#1a1a1a" stroke-width="1.2"/><path d="M10.2 254.6 A22.5 22.5 0 0 1 32.9 232.4" stroke="#1a1a1a" stroke-width="1.3" fill="none"/><circle cx="61.4" cy="243.4" r="11.2" stroke="#1a1a1a" stroke-width="1.3" fill="none"/><ellipse cx="21.9" cy="283.6" rx="15.6" ry="5.7" transform="rotate(-44 21.9 283.6)" stroke="#1a1a1a" stroke-width="1.3" fill="none"/><path d="M50 274 C54 272 60 277.5 64.8 282.1 C68.5 285.5 72 288 73.5 285.5 C75 282 73 273 70 273.2 C67 273.5 65.5 279 64.8 282.1 C63 288 60 294.5 56.8 294.5 C53 294.5 50 283 49.3 278 C49 275.5 49.5 274.5 50 274 Z" stroke="#1a1a1a" stroke-width="1.2" fill="none"/><path d="M16.8 318.6 C11 318.8 10 327 15.7 328.6 H32.9" stroke="#1a1a1a" stroke-width="1.3" fill="none"/><path d="M47.2 317.5 L51.2 311 H59.2 L63.2 317.5 L59.2 324.1 H51.2 Z" stroke="#1a1a1a" stroke-width="1.2" fill="none"/><path d="M64.5 325 L70.5 315.5 L76.8 325 Z" stroke="#1a1a1a" stroke-width="1.2" fill="none"/><rect x="48.6" y="329.5" width="15.7" height="7.6" stroke="#1a1a1a" stroke-width="1.2" fill="none"/><defs><pattern id="hp" width="3" height="3" patternUnits="userSpaceOnUse" patternTransform="rotate(45)"><rect width="1" height="3" fill="#555"/></pattern></defs><path d="M10.5 372 V363 L17 355.8 H33.5 V372 Z" fill="url(#hp)" stroke="#1a1a1a" stroke-width="1.2"/><circle cx="24.8" cy="364.4" r="3.2" fill="#ececec" stroke="#1a1a1a" stroke-width="1.1"/><text x="22.2" y="422.6" font-family="Liberation Serif" font-size="31" text-anchor="middle" fill="#000">A</text><path d="M51 402.5 V420.7 M72.1 402.5 V420.7 M51 405.8 H72.1" stroke="#1a1a1a" stroke-width="1.3" fill="none"/><path d="M51.5 405.8 L55.5 403.6 V408 Z M71.6 405.8 L67.6 403.6 V408 Z" fill="#1a1a1a"/><rect x="9.8" y="443" width="24.5" height="18.3" rx="1" fill="#fff" stroke="#000" stroke-width="1.5"/><path d="M12 459 L17 452 L20 455 L25 449.5 L32 459 Z" fill="#000"/><circle cx="29.5" cy="447.5" r="1.6" fill="#000"/><path d="M7 487 V513 H28 Z" fill="none" stroke="#1a1a1a" stroke-width="1.3"/><path d="M10.5 503 V509.5 H16.5 Z" fill="none" stroke="#1a1a1a" stroke-width="1.1"/><path d="M13 486 L22 495.5" stroke="#c82828" stroke-width="3.2" stroke-linecap="round"/><path d="M22 495.5 L24 498" stroke="#333" stroke-width="1.2"/><path d="M31 486.5 V489 M31 489 L28 505 M31 489 L34.3 505" stroke="#1a1a1a" stroke-width="1.2" fill="none"/><circle cx="31" cy="489.5" r="1.3" fill="none" stroke="#1a1a1a"/><rect x="48.5" y="495" width="27" height="9.5" rx="1.5" fill="#fff" stroke="#222" stroke-width="1.2"/><path d="M50.5 495.5V499.5 M52.7 495.5V498 M54.9 495.5V499.5 M57.1 495.5V498 M59.3 495.5V499.5 M61.5 495.5V498 M63.7 495.5V499.5 M65.9 495.5V498 M68.1 495.5V499.5 M70.3 495.5V498 M72.5 495.5V499.5 M74.7 495.5V498" stroke="#333" stroke-width="0.6"/><path d="M10 529 H29.5 V543 H10 Z" fill="none" stroke="#555" stroke-width="1.1"/><circle cx="26.5" cy="542" r="8.2" fill="none" stroke="#555" stroke-width="1.1"/><path d="M6 543 H10" stroke="#999" stroke-width="0.9"/><path d="M49 537 L69 526" stroke="#d83a3a" stroke-width="1.1"/><path d="M60.20 533.50 L60.20 546.64 L63.35 543.40 L66.14 549.97 L68.48 548.98 L65.78 542.50 L69.83 542.14 Z" fill="#f6f6f6" stroke="#707070" stroke-width="1"/><path d="M10.6 583.7 L24.4 576.4 L34.1 582.1 L20.3 589.4 Z M10.6 583.7 V595.1 L20.3 600.3 L34.1 593.5 V582.1 M20.3 589.4 V600.3" fill="none" stroke="#1a1a1a" stroke-width="1.3" stroke-linejoin="round"/></svg>
<div class="a" style="left:85px;top:170px;width:707px;height:28px;background:#fff"></div>
<div class="a" style="left:792px;top:170px;width:1px;height:28px;background:#cfcfcf"></div>
<div class="a" style="left:793px;top:197px;width:707px;height:1px;background:#b4b4b4"></div>
<svg class="a" style="left:100px;top:174px;" width="19" height="19" viewBox="0 0 19 19"><g transform="scale(1.0555555555555556)">
<defs><linearGradient id="lg19" x1="0" y1="0" x2="1" y2="1"><stop offset="0" stop-color="#8a8cb0"/><stop offset="0.6" stop-color="#2e3470"/><stop offset="1" stop-color="#1e2460"/></linearGradient></defs>
<circle cx="8.2" cy="7.6" r="6.6" fill="#f4f6fb" stroke="url(#lg19)" stroke-width="2.8"/>
<path d="M8.2 3 V12 M3.8 7.6 H12.6" stroke="#c8ccd8" stroke-width="0.7"/>
<path d="M9 8.5 L14.5 14.5" stroke="#e0c040" stroke-width="2.6" stroke-linecap="round"/>
<path d="M14 14 L15.8 16" stroke="#c89050" stroke-width="1.6" stroke-linecap="round"/>
</g></svg>
<div class="a t" style="left:407.5px;top:178.5px;font-size:12.8px;color:#000">Sans titre 5</div>
<svg class="a" style="left:760px;top:177px;" width="14" height="14" viewBox="0 0 14 14"><rect x="0.6" y="0.6" width="12.8" height="12.8" rx="2" fill="#e07a5c" stroke="#a84a38" stroke-width="1.2"/><path d="M4.2 4.2 L9.8 9.8 M9.8 4.2 L4.2 9.8" stroke="#fff4ee" stroke-width="2"/></svg>
<div class="a" style="left:84px;top:198px;width:1398px;height:26px;background:#f0f0f0"></div>
<div class="a" style="left:84px;top:198px;width:26px;height:584px;background:#f0f0f0"></div>
<svg class="a" style="left:110px;top:224px;" width="1372" height="558" viewBox="0 0 1372 558"><defs><pattern id="dots" x="0" y="7" width="10" height="10" patternUnits="userSpaceOnUse"><rect x="0" y="0" width="1" height="1" fill="#b4b4b4"/><rect x="1" y="0" width="1" height="1" fill="#e6e6e6"/><rect x="0" y="1" width="1" height="1" fill="#e6e6e6"/></pattern></defs><rect x="0" y="0" width="1372" height="558" fill="#fff"/><rect x="0" y="0" width="1372" height="555" fill="url(#dots)"/><path d="M50.5 0V558 M150.5 0V558 M250.5 0V558 M350.5 0V558 M450.5 0V558 M550.5 0V558 M650.5 0V558 M750.5 0V558 M850.5 0V558 M950.5 0V558 M1050.5 0V558 M1150.5 0V558 M1250.5 0V558 M1350.5 0V558 M0 507.5H1372 M0 407.5H1372 M0 307.5H1372 M0 207.5H1372 M0 107.5H1372 M0 7.5H1372" stroke="#e4e4e4" stroke-width="1" fill="none"/><path d="M30 507.5H71 M50.5 487V528" stroke="#9a4848" stroke-width="1"/><circle cx="50.5" cy="507.5" r="5" fill="none" stroke="#5a3030" stroke-width="1"/></svg>
<svg class="a" style="left:110px;top:198px;overflow:hidden" width="1372" height="26" viewBox="0 0 1372 26"><path d="M0.5 19V26 M10.5 23V26 M20.5 23V26 M30.5 23V26 M40.5 23V26 M50.5 19V26 M60.5 23V26 M70.5 23V26 M80.5 23V26 M90.5 23V26 M100.5 19V26 M110.5 23V26 M120.5 23V26 M130.5 23V26 M140.5 23V26 M150.5 19V26 M160.5 23V26 M170.5 23V26 M180.5 23V26 M190.5 23V26 M200.5 19V26 M210.5 23V26 M220.5 23V26 M230.5 23V26 M240.5 23V26 M250.5 19V26 M260.5 23V26 M270.5 23V26 M280.5 23V26 M290.5 23V26 M300.5 19V26 M310.5 23V26 M320.5 23V26 M330.5 23V26 M340.5 23V26 M350.5 19V26 M360.5 23V26 M370.5 23V26 M380.5 23V26 M390.5 23V26 M400.5 19V26 M410.5 23V26 M420.5 23V26 M430.5 23V26 M440.5 23V26 M450.5 19V26 M460.5 23V26 M470.5 23V26 M480.5 23V26 M490.5 23V26 M500.5 19V26 M510.5 23V26 M520.5 23V26 M530.5 23V26 M540.5 23V26 M550.5 19V26 M560.5 23V26 M570.5 23V26 M580.5 23V26 M590.5 23V26 M600.5 19V26 M610.5 23V26 M620.5 23V26 M630.5 23V26 M640.5 23V26 M650.5 19V26 M660.5 23V26 M670.5 23V26 M680.5 23V26 M690.5 23V26 M700.5 19V26 M710.5 23V26 M720.5 23V26 M730.5 23V26 M740.5 23V26 M750.5 19V26 M760.5 23V26 M770.5 23V26 M780.5 23V26 M790.5 23V26 M800.5 19V26 M810.5 23V26 M820.5 23V26 M830.5 23V26 M840.5 23V26 M850.5 19V26 M860.5 23V26 M870.5 23V26 M880.5 23V26 M890.5 23V26 M900.5 19V26 M910.5 23V26 M920.5 23V26 M930.5 23V26 M940.5 23V26 M950.5 19V26 M960.5 23V26 M970.5 23V26 M980.5 23V26 M990.5 23V26 M1000.5 19V26 M1010.5 23V26 M1020.5 23V26 M1030.5 23V26 M1040.5 23V26 M1050.5 19V26 M1060.5 23V26 M1070.5 23V26 M1080.5 23V26 M1090.5 23V26 M1100.5 19V26 M1110.5 23V26 M1120.5 23V26 M1130.5 23V26 M1140.5 23V26 M1150.5 19V26 M1160.5 23V26 M1170.5 23V26 M1180.5 23V26 M1190.5 23V26 M1200.5 19V26 M1210.5 23V26 M1220.5 23V26 M1230.5 23V26 M1240.5 23V26 M1250.5 19V26 M1260.5 23V26 M1270.5 23V26 M1280.5 23V26 M1290.5 23V26 M1300.5 19V26 M1310.5 23V26 M1320.5 23V26 M1330.5 23V26 M1340.5 23V26 M1350.5 19V26 M1360.5 23V26 M1370.5 23V26" stroke="#000" stroke-width="1"/><g font-family="Liberation Sans" font-size="15.6" fill="#3a3a3a"><text transform="translate(0 15) scale(0.9 1)" text-anchor="middle">-5</text><text transform="translate(50 15) scale(0.9 1)" text-anchor="middle">0</text><text transform="translate(100 15) scale(0.9 1)" text-anchor="middle">5</text><text transform="translate(150 15) scale(0.9 1)" text-anchor="middle">10</text><text transform="translate(200 15) scale(0.9 1)" text-anchor="middle">15</text><text transform="translate(250 15) scale(0.9 1)" text-anchor="middle">20</text><text transform="translate(300 15) scale(0.9 1)" text-anchor="middle">25</text><text transform="translate(350 15) scale(0.9 1)" text-anchor="middle">30</text><text transform="translate(400 15) scale(0.9 1)" text-anchor="middle">35</text><text transform="translate(450 15) scale(0.9 1)" text-anchor="middle">40</text><text transform="translate(500 15) scale(0.9 1)" text-anchor="middle">45</text><text transform="translate(550 15) scale(0.9 1)" text-anchor="middle">50</text><text transform="translate(600 15) scale(0.9 1)" text-anchor="middle">55</text><text transform="translate(650 15) scale(0.9 1)" text-anchor="middle">60</text><text transform="translate(700 15) scale(0.9 1)" text-anchor="middle">65</text><text transform="translate(750 15) scale(0.9 1)" text-anchor="middle">70</text><text transform="translate(800 15) scale(0.9 1)" text-anchor="middle">75</text><text transform="translate(850 15) scale(0.9 1)" text-anchor="middle">80</text><text transform="translate(900 15) scale(0.9 1)" text-anchor="middle">85</text><text transform="translate(950 15) scale(0.9 1)" text-anchor="middle">90</text><text transform="translate(1000 15) scale(0.9 1)" text-anchor="middle">95</text><text transform="translate(1050 15) scale(0.9 1)" text-anchor="middle">100</text><text transform="translate(1100 15) scale(0.9 1)" text-anchor="middle">105</text><text transform="translate(1150 15) scale(0.9 1)" text-anchor="middle">110</text><text transform="translate(1200 15) scale(0.9 1)" text-anchor="middle">115</text><text transform="translate(1250 15) scale(0.9 1)" text-anchor="middle">120</text><text transform="translate(1300 15) scale(0.9 1)" text-anchor="middle">125</text><text transform="translate(1350 15) scale(0.9 1)" text-anchor="middle">130</text></g></svg>
<div class="a" style="left:1461px;top:218px;width:5px;height:5px;background:#000;clip-path:polygon(0 0,100% 0,0 100%)"></div>
<svg class="a" style="left:84px;top:224px;overflow:hidden" width="26" height="558" viewBox="0 0 26 558"><path d="M23 547.5H26 M23 537.5H26 M23 527.5H26 M23 517.5H26 M19 507.5H26 M23 497.5H26 M23 487.5H26 M23 477.5H26 M23 467.5H26 M19 457.5H26 M23 447.5H26 M23 437.5H26 M23 427.5H26 M23 417.5H26 M19 407.5H26 M23 397.5H26 M23 387.5H26 M23 377.5H26 M23 367.5H26 M19 357.5H26 M23 347.5H26 M23 337.5H26 M23 327.5H26 M23 317.5H26 M19 307.5H26 M23 297.5H26 M23 287.5H26 M23 277.5H26 M23 267.5H26 M19 257.5H26 M23 247.5H26 M23 237.5H26 M23 227.5H26 M23 217.5H26 M19 207.5H26 M23 197.5H26 M23 187.5H26 M23 177.5H26 M23 167.5H26 M19 157.5H26 M23 147.5H26 M23 137.5H26 M23 127.5H26 M23 117.5H26 M19 107.5H26 M23 97.5H26 M23 87.5H26 M23 77.5H26 M23 67.5H26 M19 57.5H26 M23 47.5H26 M23 37.5H26 M23 27.5H26 M23 17.5H26 M19 7.5H26" stroke="#000" stroke-width="1"/><g font-family="Liberation Sans" font-size="15.6" fill="#3a3a3a"><text transform="translate(15 557) rotate(-90) scale(0.9 1)" x="0" y="0" text-anchor="middle">-5</text><text transform="translate(15 507) rotate(-90) scale(0.9 1)" x="0" y="0" text-anchor="middle">0</text><text transform="translate(15 457) rotate(-90) scale(0.9 1)" x="0" y="0" text-anchor="middle">5</text><text transform="translate(15 407) rotate(-90) scale(0.9 1)" x="0" y="0" text-anchor="middle">10</text><text transform="translate(15 357) rotate(-90) scale(0.9 1)" x="0" y="0" text-anchor="middle">15</text><text transform="translate(15 307) rotate(-90) scale(0.9 1)" x="0" y="0" text-anchor="middle">20</text><text transform="translate(15 257) rotate(-90) scale(0.9 1)" x="0" y="0" text-anchor="middle">25</text><text transform="translate(15 207) rotate(-90) scale(0.9 1)" x="0" y="0" text-anchor="middle">30</text><text transform="translate(15 157) rotate(-90) scale(0.9 1)" x="0" y="0" text-anchor="middle">35</text><text transform="translate(15 107) rotate(-90) scale(0.9 1)" x="0" y="0" text-anchor="middle">40</text><text transform="translate(15 57) rotate(-90) scale(0.9 1)" x="0" y="0" text-anchor="middle">45</text><text transform="translate(15 7) rotate(-90) scale(0.9 1)" x="0" y="0" text-anchor="middle">50</text></g></svg>
<div class="a" style="left:103px;top:224px;width:3px;height:2px;background:#333"></div>
<div class="a" style="left:1482px;top:224px;width:18px;height:558px;background:#f0f0f0"></div>
<div class="a" style="left:1482px;top:339px;width:18px;height:178px;background:#cdcdcd"></div>
<svg class="a" style="left:1482px;top:224px;" width="18" height="558" viewBox="0 0 18 558"><path d="M4.5 14.5 L9 10 L13.5 14.5" fill="none" stroke="#5a5a5a" stroke-width="2"/><path d="M4.5 543.5 L9 548 L13.5 543.5" fill="none" stroke="#5a5a5a" stroke-width="2"/></svg>
<div class="a" style="left:84px;top:782px;width:1416px;height:25px;background:#f0f0f0"></div>
<div class="a" style="left:316px;top:782px;width:1107px;height:18px;background:#cdcdcd"></div>
<svg class="a" style="left:110px;top:782px;" width="1340" height="18" viewBox="0 0 1340 18"><path d="M13.5 5 L9 9.5 L13.5 14" fill="none" stroke="#5a5a5a" stroke-width="2"/><path d="M1320.5 5 L1325 9.5 L1320.5 14" fill="none" stroke="#5a5a5a" stroke-width="2"/></svg>
<div class="a t" style="left:1464px;top:786px;font-size:13px;color:#111">1 &lt; 10</div>
<div class="a" style="left:84px;top:807px;width:1397px;height:17px;background:#fff"></div>
<div class="a t" style="left:88.5px;top:809px;font-size:13px;color:#3a74b8">125</div>
<svg class="a" style="left:1482px;top:807px;" width="18" height="17" viewBox="0 0 18 17"><path d="M5 6 L8.5 2.5 L12 6" fill="none" stroke="#505050" stroke-width="1.5"/><path d="M5 11.5 L8.5 15 L12 11.5" fill="none" stroke="#505050" stroke-width="1.5"/></svg>
<div class="a" style="left:84px;top:823px;width:1416px;height:1px;background:#a8a8a8"></div>
<div class="a t" style="left:85.5px;top:833px;font-size:13px;color:#000">Commande :</div>
<div class="a" style="left:163px;top:830px;width:1312px;height:18px;background:#fff"></div>
<div class="a t" style="left:167px;top:833px;font-size:13px;color:#000">=125</div>
<div class="a" style="left:1475px;top:827px;width:25px;height:24px;background:#dcdcdc;border:1px solid #b0b0b0"></div>
<svg class="a" style="left:1479px;top:833px;" width="18" height="13" viewBox="0 0 18 13"><rect x="0.5" y="0.5" width="16.5" height="11" fill="#e4e4e4" stroke="#404040" stroke-width="1"/><rect x="0.5" y="0.5" width="16.5" height="3.2" fill="#000"/><rect x="14" y="1.2" width="1" height="1" fill="#fff"/></svg>
<div class="a" style="left:0px;top:852px;width:1500px;height:1px;background:#a0a0a0"></div>
<div class="a" style="left:0px;top:853px;width:1500px;height:40px;background:#f0f0f0"></div>
<div class="a t" style="left:2px;top:859px;font-size:15px;color:#000">130.2;50.7</div>
<div class="a t" style="left:2px;top:877.5px;font-size:15px;color:#000">@130.2;50.7</div>
<div class="a" style="left:256px;top:856px;width:1px;height:37px;background:#a8a8a8"></div>
<div class="a t" style="left:259.3px;top:859px;font-size:15px;color:#000">139.723&lt;21°</div>
<div class="a t" style="left:259.3px;top:877.5px;font-size:15px;color:#000">@139.723&lt;21°</div>
<div class="a t" style="left:480px;top:860px;width:228px;text-align:right;font-size:14.4px;line-height:17.5px;white-space:normal">Sélectionne une entité ou une région</div>
<svg class="a" style="left:724px;top:859px;" width="19" height="31" viewBox="0 0 19 31"><rect x="1" y="1" width="17" height="29" rx="8.5" fill="#fff" stroke="#404040" stroke-width="1"/><path d="M1 13.5 H18 M9.5 1 V13.5" stroke="#404040" stroke-width="1"/><rect x="7.5" y="4" width="4" height="7" rx="2" fill="#fff" stroke="#404040"/></svg>
<div class="a t" style="left:958px;top:870px;font-size:14.4px;color:#000">Aucune des entités sélectionnées.</div>
<div class="a" style="left:0;top:89px;width:78px;height:46px;border:4px solid #f22a0f"></div>
<svg class="a" style="left:0px;top:0px;pointer-events:none" width="1500" height="893" viewBox="0 0 1500 893"><path d="M92 151.5 L297 313.2" stroke="#f22a0f" stroke-width="4.7" stroke-linecap="butt"/><path d="M79.4 141.2 L100.2 145.4 L88.3 160.4 Z" fill="#f22a0f" stroke="#f22a0f" stroke-width="0.8" stroke-linejoin="round"/></svg>
</body></html>
